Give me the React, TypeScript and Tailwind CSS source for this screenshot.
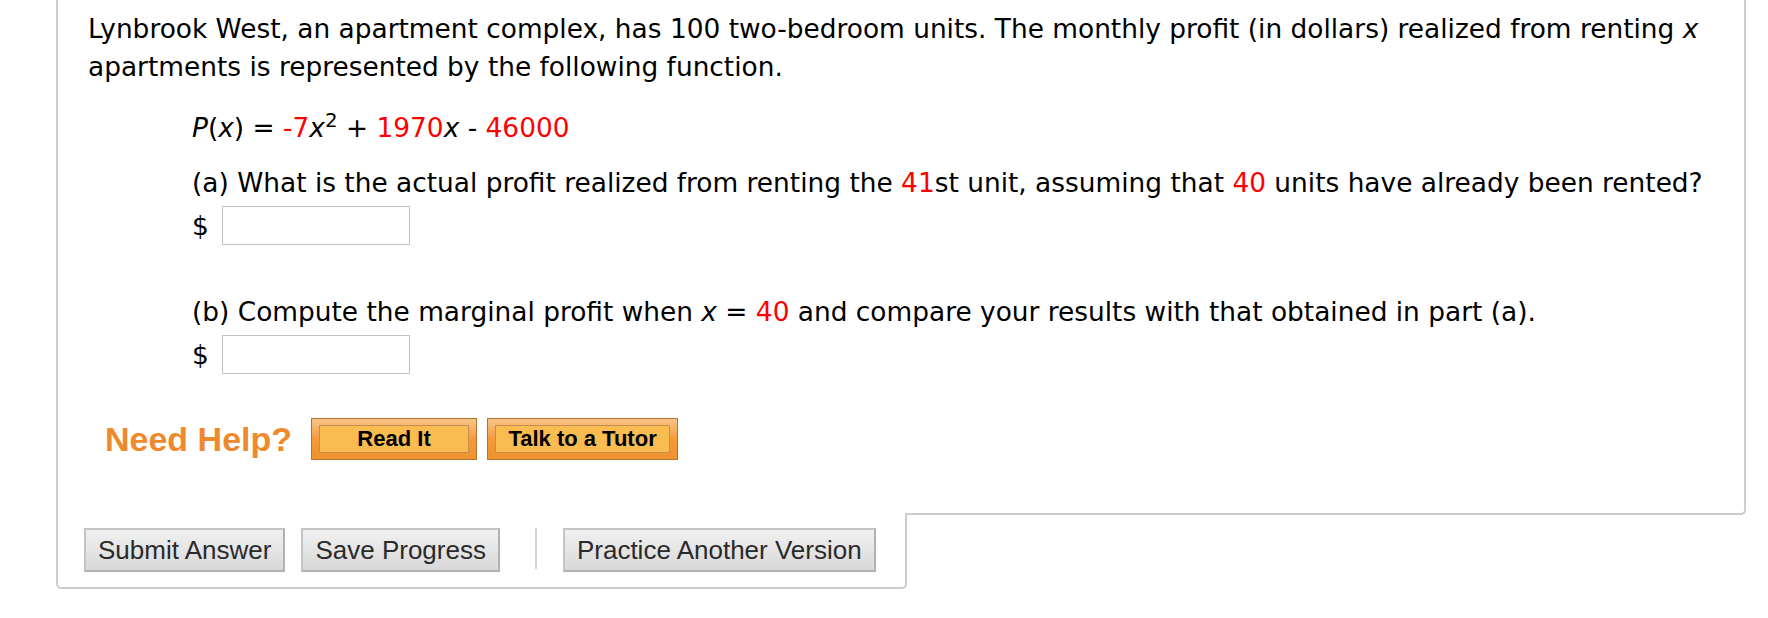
import React from 'react';

const RED = 'text-[#ff0000]';

function Red({ children }: { children: React.ReactNode }) {
  return <span className={RED}>{children}</span>;
}

function AnswerField() {
  return (
    <div className="mt-[4px] flex items-center gap-[13px]">
      <span>$</span>
      <input
        type="text"
        className="h-[39px] w-[188px] border border-[#c3c3c3] bg-white px-2 outline-none"
      />
    </div>
  );
}

function HelpButton({ label, width }: { label: string; width: string }) {
  return (
    <button
      className={`h-[42px] ${width} border border-[#b5732f] bg-linear-to-b from-[#f8c58a] via-[#f39a3a] to-[#ef912f] px-[7px] py-[6px]`}
    >
      <span className="flex h-full w-full items-center justify-center border border-[#c98c4c] bg-[#f9bc50] font-['Liberation_Sans',Arial,sans-serif] text-[22px] leading-none font-bold text-black">
        {label}
      </span>
    </button>
  );
}

function GrayButton({ children }: { children: React.ReactNode }) {
  return (
    <button className="h-[44px] border-2 border-[#b2b2b2] border-t-[#c4c4c4] border-l-[#c4c4c4] bg-linear-to-b from-[#f1f1f1] to-[#d8d8d8] px-[12px] font-['Liberation_Sans',Arial,sans-serif] text-[26px] leading-none text-[#2a2a2a]">
      {children}
    </button>
  );
}

export default function App() {
  return (
    <div className="min-h-screen bg-white pr-[22px] pl-[56px] font-['DejaVu_Sans',Verdana,sans-serif] text-black">
      {/* Question */}
      <div className="rounded-br-[5px] border-x-2 border-b-2 border-[#cccccc] pt-[10px] pr-[10px] pb-[53px] pl-[30px] text-[26.4px] leading-[38px]">
        <p>
          Lynbrook West, an apartment complex, has 100 two-bedroom units. The monthly profit (in
          dollars) realized from renting <i>x</i> apartments is represented by the following
          function.
        </p>

        <div className="pl-[104px]">
          <p className="mt-[23px]">
            <i>P</i>(<i>x</i>) = <Red>-7</Red>
            <i>x</i>
            <sup>2</sup> + <Red>1970</Red>
            <i>x</i> - <Red>46000</Red>
          </p>

          <p className="mt-[17px]">
            (a) What is the actual profit realized from renting the <Red>41</Red>st unit, assuming
            that <Red>40</Red> units have already been rented?
          </p>
          <AnswerField />

          <p className="mt-[48px]">
            (b) Compute the marginal profit when <i>x</i> = <Red>40</Red> and compare your results
            with that obtained in part (a).
          </p>
          <AnswerField />
        </div>

        {/* Need help */}
        <div className="mt-[44px] flex items-center pl-[17px]">
          <span className="mr-[19px] font-['Liberation_Sans',Arial,sans-serif] text-[34px] leading-none font-bold text-[#ef8a2c]">
            Need Help?
          </span>
          <HelpButton label="Read It" width="w-[166px]" />
          <div className="w-[10px]" />
          <HelpButton label="Talk to a Tutor" width="w-[191px]" />
        </div>
      </div>

      {/* Actions */}
      <div className="-mt-[2px] flex w-[851px] items-start rounded-b-[5px] border-x-2 border-b-2 border-[#cccccc] bg-white pt-[15px] pb-[15px] pl-[26px]">
        <GrayButton>Submit Answer</GrayButton>
        <div className="w-[16px]" />
        <GrayButton>Save Progress</GrayButton>
        <div className="mr-[26px] ml-[35px] h-[41px] w-[2px] bg-[#d4d4d4]" />
        <GrayButton>Practice Another Version</GrayButton>
      </div>
    </div>
  );
}
